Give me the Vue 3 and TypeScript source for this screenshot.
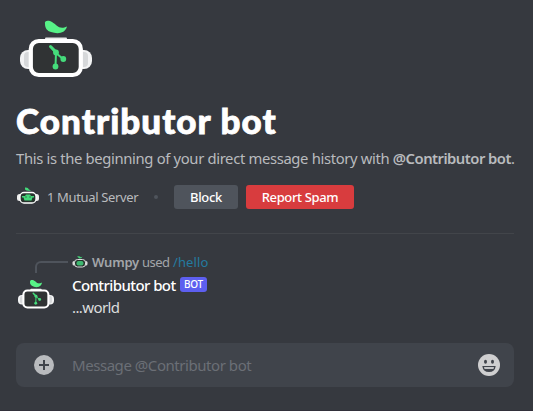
<script setup lang="ts">
const botName: string = 'Contributor bot'
</script>

<template>
  <main class="chat">
    <svg class="hero-icon" viewBox="0 0 80 80">
      <g id="robot">
        <rect x="4" y="34" width="20" height="19" rx="8" fill="#f2f3f4" />
        <rect x="8" y="36" width="10" height="15" rx="4" fill="#d6d8da" />
        <rect x="56" y="34" width="20" height="19" rx="8" fill="#f2f3f4" />
        <rect x="62" y="36" width="10" height="15" rx="4" fill="#d6d8da" />
        <rect x="29" y="21.500" width="22" height="6" rx="1" fill="#e8e9ea" />
        <rect x="14.800" y="25" width="50" height="34" rx="8" fill="#303334" stroke="#fff" stroke-width="4.200" />
        <path d="M29 8C28 4 33 4 36 6C41 9 43 14 51 10.500C49 18 41 18 35 16C31 15 29 12 29 8Z" fill="#57f287" />
        <g fill="none" stroke="#45dc7b" stroke-width="2" stroke-linecap="round">
          <path d="M35 31L40 37L39.500 50M40 37L47 43" />
          <path d="M34.500 30.500L39 35" stroke-width="3" />
        </g>
        <g fill="#45dc7b"><circle cx="40" cy="36.500" r="2.900" /><circle cx="39.500" cy="50.500" r="2.900" /><circle cx="47.300" cy="43" r="2.900" /></g>
      </g>
    </svg>
    <h1>{{ botName }}</h1>
    <p class="description"><span class="regular">This is the beginning of your direct message history with </span><strong>@{{ botName }}</strong>.</p>
    <div class="actions">
      <svg class="server-icon" viewBox="0 0 22 18">
        <path d="M8 .5Q11 0 12 2.500L14 3.500Q10 4.500 8 2.500Z" fill="#43d879" />
        <rect x="0" y="7" width="5" height="7" rx="2.500" fill="#eee" /><rect x="17" y="7" width="5" height="7" rx="2.500" fill="#eee" />
        <rect x="3" y="5.500" width="16" height="10.500" rx="4" fill="#27332d" stroke="#fff" stroke-width="1.300" />
        <path d="M5 9H8L9 7.500H13L14 9H17V10.500H15.500L14.500 13.500H7.500L6.500 10.500H5Z" fill="#43d879" />
        <path d="M8.500 10H9.500M12.500 10H13.500" stroke="#27332d" />
      </svg>
      <span class="mutual">1 Mutual Server</span>
      <span class="dot"></span>
      <button class="block">Block</button>
      <button class="report">Report Spam</button>
    </div>
    <hr />
    <section class="message">
      <div class="gutter">
        <div class="reply-line"></div>
        <svg class="avatar" viewBox="0 0 80 80">
          <use href="#robot" />
          <path d="M28 8C28 2 35 3 39 7C43 12 47 12 52 9C51 18 42 20 35 17C30 16 28 12 28 8Z" fill="#57f287" />
        </svg>
      </div>
      <div class="content">
        <div class="used">
          <svg class="user-icon" viewBox="0 0 16 14">
            <path d="M5 1.500Q8 1 8.500 2Q9 2.500 10.500 1.500Q10 3.500 7.500 3.500Z" fill="#43d879" />
            <rect x="0.500" y="6" width="3" height="4.500" rx="1.500" fill="#ddd" /><rect x="12.500" y="6" width="3" height="4.500" rx="1.500" fill="#ddd" />
            <rect x="2.500" y="4.500" width="11" height="7.500" rx="3" fill="#27332d" stroke="#dedfe0" />
            <rect x="4.500" y="6" width="7" height="4.500" rx="2" fill="#3fb871" />
          </svg>
          <b>Wumpy</b><span class="verb">used</span><span class="command">/hello</span>
        </div>
        <div class="author"><span class="name">{{ botName }}</span><span class="badge">BOT</span></div>
        <div class="reply">...world</div>
      </div>
    </section>
    <div class="composer">
      <svg class="plus" viewBox="0 0 20 20"><circle cx="10" cy="10" r="10" fill="#b9bbbe" /><path d="M10 5V15M5 10H15" stroke="#40444b" stroke-width="2" /></svg>
      <span class="placeholder">Message @{{ botName }}</span>
      <svg class="smile" viewBox="0 0 22 22"><circle cx="11" cy="11" r="11" fill="#cfcfd0" /><ellipse cx="7.500" cy="7.800" rx="1.500" ry="2" fill="#40444b" /><ellipse cx="14.500" cy="7.800" rx="1.500" ry="2" fill="#40444b" /><path d="M4.300 12H17.700Q17 18 11 18Q5 18 4.300 12Z" fill="#40444b" /><path d="M6 13.200H16L15.500 14.700H6.500Z" fill="#eee" /></svg>
    </div>
  </main>
</template>

<style>
body { margin: 0; background: #36393f; }
</style>
<style scoped>
.chat { box-sizing: border-box; width: 533px; height: 411px; padding: 16px 19px 0 16px; overflow: hidden; background: #36393f; border-bottom: 1px solid #32303a; font-family: "Noto Sans", sans-serif; color: #b9bbbe; white-space: nowrap; }
svg { display: block; flex: none; }
.hero-icon { width: 80px; height: 80px; }
h1 { margin: 4px 0 0; height: 40px; font: 900 35px/40px Lato, sans-serif; color: #fff; letter-spacing: 1.05px; -webkit-text-stroke: .8px #fff; }
.description { margin: 6px 0 0; height: 24px; font-size: 14.8px; line-height: 24px; letter-spacing: -.34px; }
.regular { white-space: pre; }
.description strong { font-weight: 600; letter-spacing: -.52px; }
.actions { display: flex; align-items: center; height: 24px; margin-top: 15px; }
.server-icon { width: 22px; height: 18px; margin: -2px 0 0 1px; }
.mutual { width: 91px; margin-left: 8px; font-size: 13px; letter-spacing: -.36px; }
.dot { width: 4px; height: 4px; margin-left: 16px; border-radius: 50%; background: #4f545c; }
button { height: 24px; margin: 0 0 0 16px; padding: 0; width: 64px; border: 0; border-radius: 3px; background: #4f545c; color: #fff; font: 500 13px/24px "Noto Sans", sans-serif; letter-spacing: -.35px; }
.report { width: 108px; margin-left: 8px; background: #d83c3e; }
hr { height: 1px; margin: 24px 0 0; border: 0; background: #42454a; }
.message { display: flex; margin-top: 17px; height: 92px; }
.gutter { width: 56px; }
.reply-line { box-sizing: border-box; width: 33px; height: 12px; margin: 10px 0 0 19px; border: solid #4f545c; border-width: 2px 0 0 2px; border-top-left-radius: 6px; }
.avatar { width: 40px; height: 40px; margin-top: 5px; }
.used { display: flex; align-items: center; height: 22px; font-size: 13px; color: #a3a6aa; }
.user-icon { width: 16px; height: 14px; margin: -1px 4px 0 0; }
.used b { width: 47px; font-weight: 600; letter-spacing: -.2px; }
.verb { width: 28px; margin-left: 3px; letter-spacing: -.5px; }
.command { margin-left: 3px; color: #247ba0; letter-spacing: .1px; }
.author { display: flex; align-items: center; height: 23px; }
.name { width: 104px; color: #fff; font-size: 15px; font-weight: 500; letter-spacing: -.58px; }
.badge { width: 27px; height: 15px; margin-left: 4px; border-radius: 3px; background: #5d5ff0; color: #fff; font-size: 10px; font-weight: 500; line-height: 15px; letter-spacing: -.2px; text-align: center; }
.reply { line-height: 22px; font-size: 15px; letter-spacing: -.6px; color: #dcddde; }
.composer { display: flex; align-items: center; box-sizing: border-box; width: 498px; height: 44px; padding: 0 14px 0 18px; border-radius: 8px; background: #40444b; }
.plus { width: 20px; height: 20px; }
.placeholder { flex: 1; margin: -1px 0 0 18px; font-size: 15px; letter-spacing: -.45px; color: #6b6f76; }
.smile { width: 22px; height: 22px; }
</style>
